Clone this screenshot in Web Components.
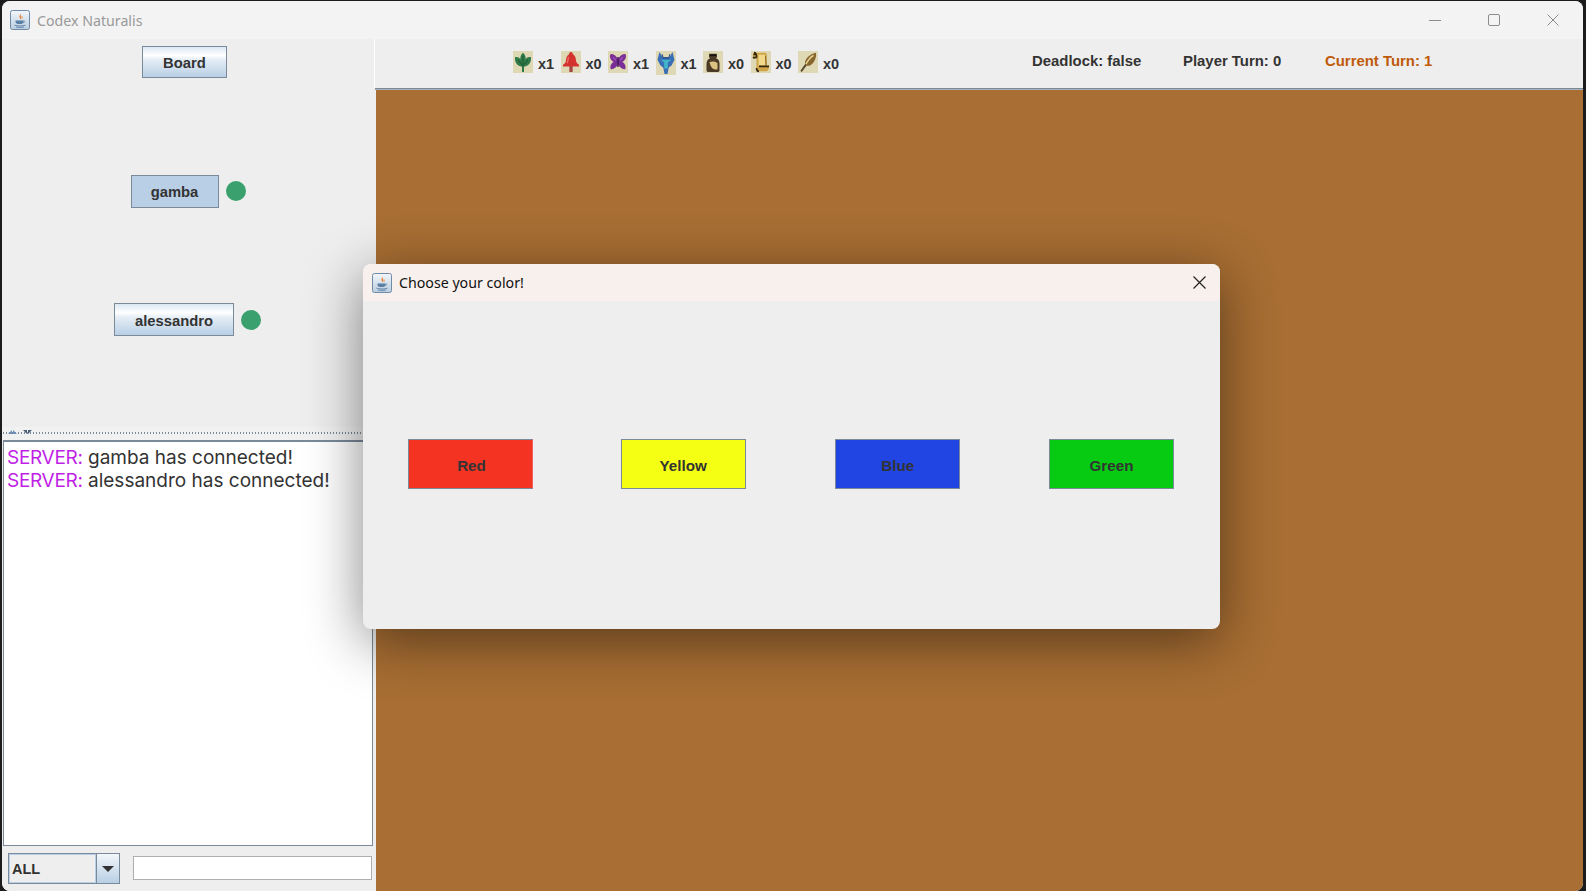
<!DOCTYPE html>
<html>
<head>
<meta charset="utf-8">
<title>Codex Naturalis</title>
<style>
  html, body { margin: 0; height: 100%; background: #1c1c1c; overflow: hidden; }
</style>
</head>
<body>
<app-window>
  <color-dialog></color-dialog>
</app-window>
<script>
const JAVA_ICON = `<svg width="20" height="20" viewBox="0 0 20 20">
  <defs><linearGradient id="jv" x1="0" y1="0" x2="0" y2="1"><stop offset="0" stop-color="#f2f6fa"/><stop offset="1" stop-color="#b9cde0"/></linearGradient></defs>
  <rect x=".5" y=".5" width="19" height="19" rx="2" fill="url(#jv)" stroke="#6f8ba6"/>
  <path d="M10.5 3c1 1.5-2 2.5-.8 4.6.4.7.6 1.2.3 1.9 1.9-1 1.8-2.3 1-3.4-.6-.9.3-1.700-.5-3.100z" fill="#e8833a"/>
  <path d="M12.500 6c-.2.6-1 1-.8 2 .1.5.2.8 0 1.300 1.300-.8 1.400-1.900.8-3.300z" fill="#f0a566"/>
  <path d="M5.500 10.500h8v1.200c0 1.400-1.300 2.300-4 2.300s-4-.9-4-2.300z" fill="#5a7fa3"/>
  <path d="M13.500 10.800c1.500-.3 1.800 1.500-.3 1.900" fill="none" stroke="#5a7fa3" stroke-width=".8"/>
  <path d="M4.500 15.200c2.500 1 8.500 1 11 0M6 17c2 .5 6 .5 8 0" fill="none" stroke="#5a7fa3" stroke-width=".9"/>
</svg>`;

const RESOURCE_ICONS = {
  leaf: `<path d="M10 1.500c2.200 1.800 3 3.800 2.600 6 1.200-1.500 3-2.300 5.400-1.800.4 3.800-1.500 7.300-5.300 8.100l-1.700.5V19H9v-4.700l-1.700-.5C3.500 13 1.600 9.500 2 5.700c2.400-.5 4.200.3 5.400 1.800C7 5.300 7.800 3.300 10 1.500z" fill="#2f7a48"/><path d="M10 4.500v10M5 8l4 4.500M15 8l-4 4.500" stroke="#1e5a35" stroke-width="1" fill="none"/>`,
  bell: `<path d="M10 1c1.200 0 1.800.8 1.800 1.900 2.600 1 3 3.800 3.300 6.100.2 1.500 1.400 2.600 2.900 3.500v1.700h-6.600V19H8.600v-4.800H2v-1.700C3.500 11.600 4.700 10.500 4.900 9c.3-2.300.7-5.100 3.300-6.100C8.200 1.800 8.800 1 10 1z" fill="#d3322f"/><path d="M7.500 5.500C7 7.200 6.900 9 6.200 11" stroke="#f0716a" stroke-width="1.200" fill="none"/><path d="M8.600 14.200h2.800V19H8.600z" fill="#9a4a42"/>`,
  butterfly: `<path d="M2.500 3c2.900-.8 5.700 1.400 7.500 4.700C11.800 4.400 14.600 2.200 17.500 3c1.400 2.500-.3 5.400-3.200 7 2.700 1.300 4 4 2.900 6.500-2.700.5-5.500-1.400-7.200-4.400-1.700 3-4.500 4.900-7.200 4.400-1.100-2.500.2-5.200 2.900-6.500C2.800 8.400 1.100 5.500 2.500 3z" fill="#7b2f96"/><path d="M10 5.500v9" stroke="#3f1a58" stroke-width="1.500"/><path d="M5 5.500l3 3M15 5.500l-3 3" stroke="#a55bc0" stroke-width="1"/>`,
  wolf: `<path d="M3.500 1l3 4.800h7l3-4.800L18.500 8l-2.800 5-3 2.400-1.200 5.600h-3l-1.200-5.600-3-2.400L1.500 8z" fill="#3a6fb5"/><path d="M4.800 8h10.400l-3.400 2.600v5.400H8.200v-5.400z" fill="#3fb6c9"/><path d="M6 2.800l1.200 3.500h5.600L14 2.800" fill="none" stroke="#274a85" stroke-width="1"/>`,
  ink: `<path d="M6 2.500h8v3l-1 1.200c2.500.8 3.500 2.600 3.500 4.800v6c0 .8-.5 1.500-1.500 1.500H5c-1 0-1.500-.7-1.500-1.500v-5.500c0-2.200 1-4.500 3.500-5.300l-1-1.200z" fill="#4a3a26"/><path d="M6.500 10c3-1 6.500-.5 8 1v5.500c-2.800.6-4.700-.1-5.800-1.600S7 12 6.500 10z" fill="#dcc280"/><rect x="7" y="3" width="6" height="1.600" fill="#17130c"/>`,
  scroll: `<path d="M3 1.500h11c1.200 0 1.800.7 1.800 1.800V13.500h2.200c.3 2.800-.9 5-3 5H8c-1.600 0-2.500-1.100-2.500-2.500V6H3C1.500 5.500 1.300 2 3 1.500z" fill="#cfa548"/><path d="M7.500 3.500h6.500v9.800H7.500z" fill="#f0d98a"/><path d="M3 1.500c1.700 0 2.600 1.500 2.600 4.500M1.800 6h3.800M2.500 3h2M5.500 15.500c0 2 1.200 3 2.500 3M8 14h10" fill="none" stroke="#33260f" stroke-width="1.600"/><path d="M14.500 4.500l.6 9" stroke="#8d6c2a" stroke-width="1"/>`,
  quill: `<path d="M18 1.500c.6 3.800-.9 7.600-3.700 10-1.800 1.600-3.900 2.200-5.700 1.900L3.800 19l-1.300-1 4.500-5.900c-.3-2 .5-4.300 2.200-6C11.300 3.900 14.800 2 18 1.500z" fill="#86652e"/><path d="M15.500 4c-2.700 1.500-5.500 4.400-7.500 8" stroke="#ecd894" stroke-width="1.400" fill="none"/><path d="M3 18.500l4.700-6" stroke="#4d4a3c" stroke-width="1.300"/>`
};

class SwingButton extends HTMLElement {
  connectedCallback() {
    const w = this.getAttribute("w") || 85;
    const h = this.getAttribute("h") || 33;
    const fill = this.getAttribute("fill");
    const bg = fill || "linear-gradient(#dbe8f3 0%, #ffffff 28%, #e6eef6 42%, #b8cfe5 100%)";
    this.attachShadow({ mode: "open" });
    this.shadowRoot.innerHTML = `
      <style>
        :host {
          display: flex;
          align-items: center;
          justify-content: center;
          box-sizing: border-box;
          width: ${w}px;
          height: ${h}px;
          padding-top: var(--btn-pad, 2px);
          border: 1px solid #7a8a99;
          background: ${bg};
          color: #333;
          font: bold var(--btn-size, 14.800px) "Liberation Sans", Arial, sans-serif;
          flex: none;
        }
      </style>
      <slot></slot>`;
  }
}

class PlayerRow extends HTMLElement {
  connectedCallback() {
    const name = this.getAttribute("name");
    const w = this.getAttribute("w");
    const fill = this.getAttribute("fill");
    const lift = this.getAttribute("lift") || 0;
    this.attachShadow({ mode: "open" });
    this.shadowRoot.innerHTML = `
      <style>
        :host { display: flex; align-items: center; gap: 7px; }
        .dot { width: 20px; height: 20px; border-radius: 50%; background: #3aa16e; margin-bottom: ${lift}px; }
      </style>
      <swing-button w="${w}" ${fill ? `fill="${fill}"` : ""}>${name}</swing-button>
      <div class="dot"></div>`;
  }
}

class SidePanel extends HTMLElement {
  connectedCallback() {
    this.attachShadow({ mode: "open" });
    this.shadowRoot.innerHTML = `
      <style>
        :host {
          display: flex;
          flex-direction: column;
          width: 372px;
          flex: none;
          background: #eeeeee;
          font-family: "Liberation Sans", Arial, sans-serif;
        }
        .players {
          height: 388px;
          box-sizing: border-box;
          padding-top: 7px;
          display: flex;
          flex-direction: column;
          align-items: center;
          gap: 97px;
        }
        .board { margin-right: 7px; }
        .first { --btn-pad: 0px; }
        .second { margin: -2px 1px 0 0; }
        .split {
          height: 13px;
          box-sizing: border-box;
          background-color: #f1f1f1;
          background-image: radial-gradient(#7a8a99 .7px, transparent .9px);
          background-size: 3px 4px;
          background-position: 0 4px;
          background-repeat: repeat-x;
          position: relative;
        }
        .split svg { position: absolute; left: 5px; top: 2px; }
        .chat {
          height: 406px;
          box-sizing: border-box;
          margin: 0 1px 0 1px;
          background: #fff;
          border: 1px solid #7a8a99;
          border-width: 2px 1px 1px 1px;
          padding: 4px 3px;
          font: 19px/23px Inter, "Liberation Sans", sans-serif;
          color: #333;
          white-space: nowrap;
        }
        .srv { color: #bf1fe6; letter-spacing: -.3px; }
        .bottom {
          flex: 1;
          display: flex;
          align-items: flex-start;
          padding: 7px 2px 0 6px;
        }
        .combo {
          display: flex;
          width: 112px;
          height: 31px;
          box-sizing: border-box;
          border: 1px solid #7a8a99;
          flex: none;
        }
        .combo .val {
          flex: 1;
          box-sizing: border-box;
          border: 1px solid #b8cfe5;
          font: bold 14.500px/29px "Liberation Sans", Arial, sans-serif;
          color: #333;
          padding-left: 2px;
        }
        .combo .arrow {
          width: 22px;
          border-left: 1px solid #7a8a99;
          background: linear-gradient(#f2f6fa, #b8cfe5);
          display: flex;
          align-items: center;
          justify-content: center;
        }
        .input {
          margin: 3px 0 0 13px;
          flex: 1;
          height: 24px;
          box-sizing: border-box;
          background: #fff;
          border: 1px solid #aeaeae;
        }
      </style>
      <div class="players">
        <swing-button class="board" w="85" h="32">Board</swing-button>
        <player-row class="first" name="gamba" w="88" fill="#b8cfe5" lift="2"></player-row>
        <player-row class="second" name="alessandro" w="120"></player-row>
      </div>
      <div class="split">
        <svg width="26" height="6" viewBox="0 0 26 6"><path d="M1 5L5 1V5zM6 5V1L10 5z" fill="#6d90b8"/><path d="M16 1h4V5zM21 1h4L21 5z" fill="#4a5f78"/></svg>
      </div>
      <div class="chat">
        <div><span class="srv">SERVER:</span> gamba has connected!</div>
        <div><span class="srv">SERVER:</span> alessandro has connected!</div>
      </div>
      <div class="bottom">
        <div class="combo">
          <div class="val">ALL</div>
          <div class="arrow"><svg width="12" height="6" viewBox="0 0 12 6"><path d="M0 0h12L6 6z" fill="#333"/></svg></div>
        </div>
        <div class="input"></div>
      </div>`;
  }
}

class ResourceCount extends HTMLElement {
  connectedCallback() {
    const icon = this.getAttribute("icon");
    const tall = this.hasAttribute("tall");
    this.attachShadow({ mode: "open" });
    this.shadowRoot.innerHTML = `
      <style>
        :host {
          display: flex;
          align-items: flex-start;
          width: 47.500px;
          color: #333;
          font: bold 14.500px "Liberation Sans", Arial, sans-serif;
          flex: none;
        }
        svg { background: #dfd8b4; flex: none; display: block; }
        span { margin: 5px 0 0 5px; }
      </style>
      <svg width="20" height="${tall ? 24 : 22}" viewBox="0 0 20 ${tall ? 22 : 20}" preserveAspectRatio="none">${RESOURCE_ICONS[icon]}</svg>
      <span>x${this.getAttribute("count")}</span>`;
  }
}

class TopBar extends HTMLElement {
  connectedCallback() {
    this.attachShadow({ mode: "open" });
    this.shadowRoot.innerHTML = `
      <style>
        :host {
          display: flex;
          align-items: flex-start;
          height: 51px;
          box-sizing: border-box;
          padding: 12px 0 0 138px;
          background: #eeeeee;
          border-left: 1px solid #fff;
          border-bottom: 1px solid #a9b3bd;
          box-shadow: inset 0 -1px 0 #7a8a99;
          color: #333;
          font: bold 14.900px "Liberation Sans", Arial, sans-serif;
        }
        .res { display: flex; width: 519px; flex: none; }
        .stat { margin-top: 2px; flex: none; }
        .deadlock { width: 151px; }
        .player { width: 142px; }
        .current { color: #bf5a0a; }
      </style>
      <div class="res">
        <resource-count icon="leaf" count="1"></resource-count>
        <resource-count icon="bell" count="0"></resource-count>
        <resource-count icon="butterfly" count="1"></resource-count>
        <resource-count icon="wolf" count="1" tall></resource-count>
        <resource-count icon="ink" count="0"></resource-count>
        <resource-count icon="scroll" count="0"></resource-count>
        <resource-count icon="quill" count="0"></resource-count>
      </div>
      <div class="stat deadlock">Deadlock: false</div>
      <div class="stat player">Player Turn: 0</div>
      <div class="stat current">Current Turn: 1</div>`;
  }
}

class ColorDialog extends HTMLElement {
  connectedCallback() {
    this.attachShadow({ mode: "open" });
    this.shadowRoot.innerHTML = `
      <style>
        :host {
          position: absolute;
          left: 363px;
          top: 264px;
          width: 857px;
          height: 365px;
          display: flex;
          flex-direction: column;
          border-radius: 8px;
          background: #eeeeee;
          box-shadow: 0 12px 56px rgba(0, 0, 0, .48);
        }
        .title {
          height: 37px;
          flex: none;
          display: flex;
          align-items: center;
          background: #f8f0ed;
          border-radius: 8px 8px 0 0;
          padding-left: 9px;
          font: 14.200px "Noto Sans", "Open Sans", sans-serif;
          color: #111;
          gap: 7px;
        }
        .title svg.close { margin-left: auto; margin-right: 14px; margin-bottom: 1px; }
        .body {
          flex: 1;
          display: flex;
          align-items: center;
          justify-content: space-between;
          padding: 0 46px 2px 45px;
          --btn-pad: 3px;
          --btn-size: 15.200px;
        }
        .red { border-right-color: #f0605a; padding-left: 2px; }
        .yellow { margin-left: -1px; margin-right: 1px; }
      </style>
      <div class="title">
        ${JAVA_ICON}
        <span>Choose your color!</span>
        <svg class="close" width="13" height="13" viewBox="0 0 13 13"><path d="M.5 .5l12 12M12.500 .5l-12 12" stroke="#222" stroke-width="1.200" fill="none"/></svg>
      </div>
      <div class="body">
        <swing-button class="red" w="125" h="50" fill="#f53322">Red</swing-button>
        <swing-button class="yellow" w="125" h="50" fill="#f5ff14">Yellow</swing-button>
        <swing-button w="125" h="50" fill="#2045e2">Blue</swing-button>
        <swing-button w="125" h="50" fill="#06cb12">Green</swing-button>
      </div>`;
  }
}

class AppWindow extends HTMLElement {
  connectedCallback() {
    this.attachShadow({ mode: "open" });
    this.shadowRoot.innerHTML = `
      <style>
        :host {
          display: flex;
          flex-direction: column;
          position: relative;
          box-sizing: border-box;
          width: 1586px;
          height: 891px;
          padding: 1px 3px 0 2px;
          overflow: hidden;
        }
        .frame {
          flex: 1;
          display: flex;
          flex-direction: column;
          border-radius: 8px;
          overflow: hidden;
          background: #eee;
          min-height: 0;
        }
        .titlebar {
          height: 38px;
          flex: none;
          display: flex;
          align-items: center;
          background: #f3f3f3;
          padding-left: 8px;
          gap: 7px;
          font: 14.200px "Noto Sans", "Open Sans", sans-serif;
          color: #999;
        }
        .controls { margin-left: auto; display: flex; align-items: center; gap: 47px; padding-right: 24px; }
        .main { flex: 1; display: flex; min-height: 0; }
        .game { flex: 1; display: flex; flex-direction: column; }
        .canvas { flex: 1; background: #a86e33; margin-left: 2px; }
      </style>
      <div class="frame">
        <div class="titlebar">
          ${JAVA_ICON}
          <span>Codex Naturalis</span>
          <div class="controls">
            <svg width="12" height="12" viewBox="0 0 12 12"><path d="M0 6.500h12" stroke="#8c8c8c"/></svg>
            <svg width="12" height="12" viewBox="0 0 12 12"><rect x=".5" y=".5" width="11" height="11" rx="1.500" fill="none" stroke="#8c8c8c"/></svg>
            <svg width="12" height="12" viewBox="0 0 12 12"><path d="M.5 .5l11 11M11.500 .5l-11 11" stroke="#8c8c8c" fill="none"/></svg>
          </div>
        </div>
        <div class="main">
          <side-panel></side-panel>
          <div class="game">
            <top-bar></top-bar>
            <div class="canvas"></div>
          </div>
        </div>
      </div>
      <slot></slot>`;
  }
}

customElements.define("swing-button", SwingButton);
customElements.define("player-row", PlayerRow);
customElements.define("side-panel", SidePanel);
customElements.define("resource-count", ResourceCount);
customElements.define("top-bar", TopBar);
customElements.define("color-dialog", ColorDialog);
customElements.define("app-window", AppWindow);
</script>
</body>
</html>
